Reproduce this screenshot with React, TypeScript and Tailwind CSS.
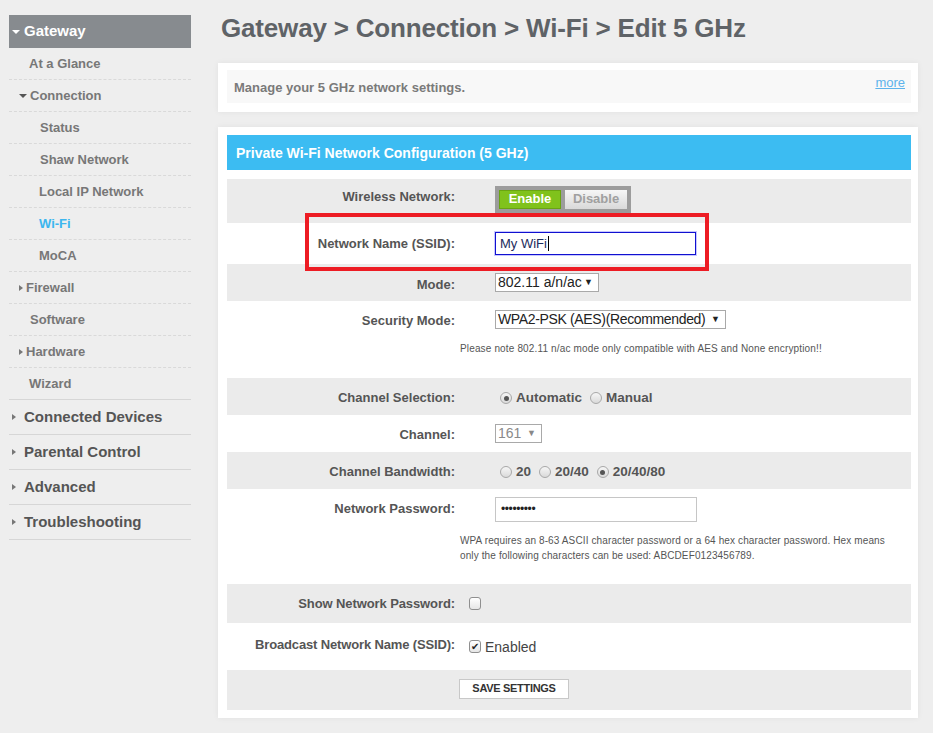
import React from "react";

const font = { fontFamily: '"Liberation Sans", Arial, sans-serif' };

function TriDown({ color }: { color: string }) {
  return <span className={`inline-block w-0 h-0 border-x-[4px] border-x-transparent border-t-[4px] ${color}`} />;
}

function TriRight() {
  return <span className="inline-block w-0 h-0 border-y-[3.5px] border-y-transparent border-l-[4px] border-l-[#777]" />;
}

type SubItem = { label: string; indent: string; tri?: "down" | "right"; active?: boolean };

const subItems: SubItem[] = [
  { label: "At a Glance", indent: "pl-[20px]" },
  { label: "Connection", indent: "pl-[10px]", tri: "down" },
  { label: "Status", indent: "pl-[31px]" },
  { label: "Shaw Network", indent: "pl-[31px]" },
  { label: "Local IP Network", indent: "pl-[30px]" },
  { label: "Wi-Fi", indent: "pl-[30px]", active: true },
  { label: "MoCA", indent: "pl-[30px]" },
  { label: "Firewall", indent: "pl-[10px]", tri: "right" },
  { label: "Software", indent: "pl-[21px]" },
  { label: "Hardware", indent: "pl-[10px]", tri: "right" },
  { label: "Wizard", indent: "pl-[20px]" },
];

const topItems = ["Connected Devices", "Parental Control", "Advanced", "Troubleshooting"];

function Sidebar() {
  return (
    <nav className="w-[182px] shrink-0">
      <div className="h-[33px] bg-[#878b8f] flex items-center pl-[3px] gap-[4px]">
        <TriDown color="border-t-white" />
        <span className="text-[15px] font-bold text-white">Gateway</span>
      </div>
      {subItems.map((it, i) => (
        <div
          key={it.label}
          className={`h-[32px] flex items-center gap-[3px] border-b pt-[1px] ${
            i === subItems.length - 1 ? "border-solid border-[#d6d6d6]" : "border-dashed border-[#d9d9d9]"
          } ${it.indent}`}
        >
          {it.tri === "down" && <TriDown color="border-t-[#555]" />}
          {it.tri === "right" && <TriRight />}
          <span className={`text-[13px] font-bold ${it.active ? "text-[#3cb6ee]" : "text-[#777]"}`}>{it.label}</span>
        </div>
      ))}
      {topItems.map((t) => (
        <div key={t} className="h-[35px] flex items-center gap-[8px] pl-[3px] border-b border-[#d6d6d6]">
          <TriRight />
          <span className="text-[15px] font-bold text-[#555]">{t}</span>
        </div>
      ))}
    </nav>
  );
}

function Radio({ checked, label, first }: { checked?: boolean; label: string; first?: boolean }) {
  return (
    <span className={`inline-flex items-center gap-[4px] mt-[3px] ${first ? "ml-[5px]" : "ml-[8px]"}`}>
      <span className="w-[12px] h-[12px] rounded-full border border-[#a8a8a8] bg-gradient-to-b from-[#f6f6f6] to-[#dadada] flex items-center justify-center">
        {checked && <span className="w-[5px] h-[5px] rounded-full bg-[#555]" />}
      </span>
      <span className="text-[13.5px] font-bold text-[#555]">{label}</span>
    </span>
  );
}

function FakeSelect({
  value,
  width,
  disabled,
  tight,
}: {
  value: string;
  width: string;
  disabled?: boolean;
  tight?: boolean;
}) {
  return (
    <div
      className={`${width} h-[19px] border border-[#a9a9a9] bg-white flex items-center justify-between whitespace-nowrap pl-[2px] pr-[5px] text-[14px] ${
        disabled ? "text-[#8a8a8a]" : "text-[#222]"
      }`}
    >
      <span className={`shrink-0 ${tight ? "tracking-[-0.35px]" : ""}`}>{value}</span>
      <span className={`shrink-0 text-[9px] ${disabled ? "text-[#888]" : "text-[#222]"}`}>▼</span>
    </div>
  );
}

function Row({
  label,
  gray,
  h,
  labelCls = "",
  children,
}: {
  label: string;
  gray?: boolean;
  h: string;
  labelCls?: string;
  children?: React.ReactNode;
}) {
  return (
    <div className={`flex items-center ${h} ${gray ? "bg-[#ebebeb]" : ""}`}>
      <div className={`w-[228px] text-right text-[13px] font-bold text-[#555] ${labelCls}`}>{label}</div>
      <div className="pl-[40px] flex items-center">{children}</div>
    </div>
  );
}

export default function App() {
  return (
    <div className="min-h-screen bg-[#eeeeee] flex pl-[9px] pt-[15px] pb-[15px]" style={font}>
      <Sidebar />
      <main className="ml-[27px] w-[700px] shrink-0 -mt-[15px]">
        <h1 className="h-[63px] pt-[12px] pl-[3px] text-[26px] font-bold text-[#5f6367] leading-[32px] tracking-[-0.18px]">
          Gateway &gt; Connection &gt; Wi-Fi &gt; Edit 5 GHz
        </h1>

        <section className="bg-white shadow-[0_0_6px_rgba(0,0,0,0.06)] pt-[7px] pb-[9px] pl-[9px] pr-[7px]">
          <div className="bg-[#f8f8f8] h-[33px] flex justify-between pl-[7px] pr-[6px]">
            <p className="text-[13px] font-bold text-[#7a7a7a] self-center mt-[2px]">Manage your 5 GHz network settings.</p>
            <a className="text-[13px] text-[#5db3ec] underline mt-[3px]">more</a>
          </div>
        </section>

        <section className="relative mt-[15px] bg-white shadow-[0_0_6px_rgba(0,0,0,0.06)] pt-[8px] pb-[8px] pl-[9px] pr-[7px]">
          <div className="h-[35px] bg-[#3cbcf2] flex items-center pl-[9px] pt-[2px]">
            <h2 className="text-[14px] font-bold text-white">Private Wi-Fi Network Configuration (5 GHz)</h2>
          </div>
          <div className="h-[9px]" />

          <Row label="Wireless Network:" gray h="h-[44px]" labelCls="-mt-[8px]">
            <div className="flex gap-[4px] bg-[#9c9c9c] p-[4px] -mt-[4px]">
              <span className="w-[62px] h-[19px] bg-[#80c21c] border border-[#6aa512] flex items-center justify-center text-[13px] font-bold text-white">
                Enable
              </span>
              <span className="w-[62px] h-[19px] bg-gradient-to-b from-[#f6f6f6] to-[#d9d9d9] flex items-center justify-center text-[13px] font-bold text-[#a0a0a0]">
                Disable
              </span>
            </div>
          </Row>

          <Row label="Network Name (SSID):" h="h-[41px]">
            <div className="w-[201px] h-[23px] border border-[#1010d0] outline outline-1 outline-[#c8c8ff] flex items-center pl-[4px] text-[13px] text-[#1c2c5c]">
              My WiFi<span className="w-px h-[15px] bg-black ml-px" />
            </div>
          </Row>

          <Row label="Mode:" gray h="h-[37px]" labelCls="mt-[4px]">
            <FakeSelect value="802.11 a/n/ac" width="w-[104px]" />
          </Row>

          <div>
            <Row label="Security Mode:" h="h-[37px]" labelCls="mt-[3px]">
              <FakeSelect value="WPA2-PSK (AES)(Recommended)" width="w-[231px]" tight />
            </Row>
            <p className="pl-[233px] text-[10px] text-[#555] leading-[12px] pt-[5px] pb-[23px] tracking-[0.15px]">
              Please note 802.11 n/ac mode only compatible with AES and None encryption!!
            </p>
          </div>

          <Row label="Channel Selection:" gray h="h-[37px]" labelCls="mt-[3px]">
            <Radio first checked label="Automatic" />
            <Radio label="Manual" />
          </Row>

          <Row label="Channel:" h="h-[37px]" labelCls="mt-[3px]">
            <FakeSelect value="161" width="w-[47px]" disabled />
          </Row>

          <Row label="Channel Bandwidth:" gray h="h-[37px]" labelCls="mt-[3px]">
            <Radio first label="20" />
            <Radio label="20/40" />
            <Radio checked label="20/40/80" />
          </Row>

          <div>
            <Row label="Network Password:" h="h-[40px]">
              <div className="w-[202px] h-[25px] border border-[#c6c6c6] flex items-center pl-[5px] text-[12px] text-[#222] tracking-[-0.4px]">
                •••••••••
              </div>
            </Row>
            <p className="pl-[233px] pr-[10px] text-[10px] text-[#555] leading-[15px] pt-[4px] pb-[21px] tracking-[0.12px]">
              WPA requires an 8-63 ASCII character password or a 64 hex character password. Hex means
              <br />
              only the following characters can be used: ABCDEF0123456789.
            </p>
          </div>

          <div className="flex items-center h-[39px] bg-[#ebebeb]">
            <div className="w-[228px] text-right text-[13px] font-bold text-[#555] tracking-[-0.1px]">
              Show Network Password:
            </div>
            <span className="ml-[14px] w-[12px] h-[13px] rounded-[3px] border border-[#8f8f8f] bg-gradient-to-b from-white to-[#e6e6e6]" />
          </div>

          <div className="flex items-center h-[47px]">
            <div className="w-[228px] text-right text-[13px] font-bold text-[#555] tracking-[-0.15px] -mt-[4px]">
              Broadcast Network Name (SSID):
            </div>
            <span className="ml-[14px] w-[12px] h-[13px] rounded-[3px] border border-[#8f8f8f] bg-gradient-to-b from-white to-[#e6e6e6] flex items-center justify-center text-[10px] leading-none text-[#222]">
              ✔
            </span>
            <span className="ml-[4px] text-[14px] text-[#444] mt-[2px]">Enabled</span>
          </div>

          <div className="h-[40px] bg-[#ebebeb] flex items-center pl-[232px]">
            <button className="w-[110px] h-[20px] -mt-[3px] bg-white border border-[#c8c8c8] text-[11px] font-bold text-[#333] tracking-[-0.3px]">
              SAVE SETTINGS
            </button>
          </div>

          <div className="absolute left-[87px] top-[86px] w-[404px] h-[58px] border-[4px] border-[#ed1c24] pointer-events-none" />
        </section>
      </main>
    </div>
  );
}
